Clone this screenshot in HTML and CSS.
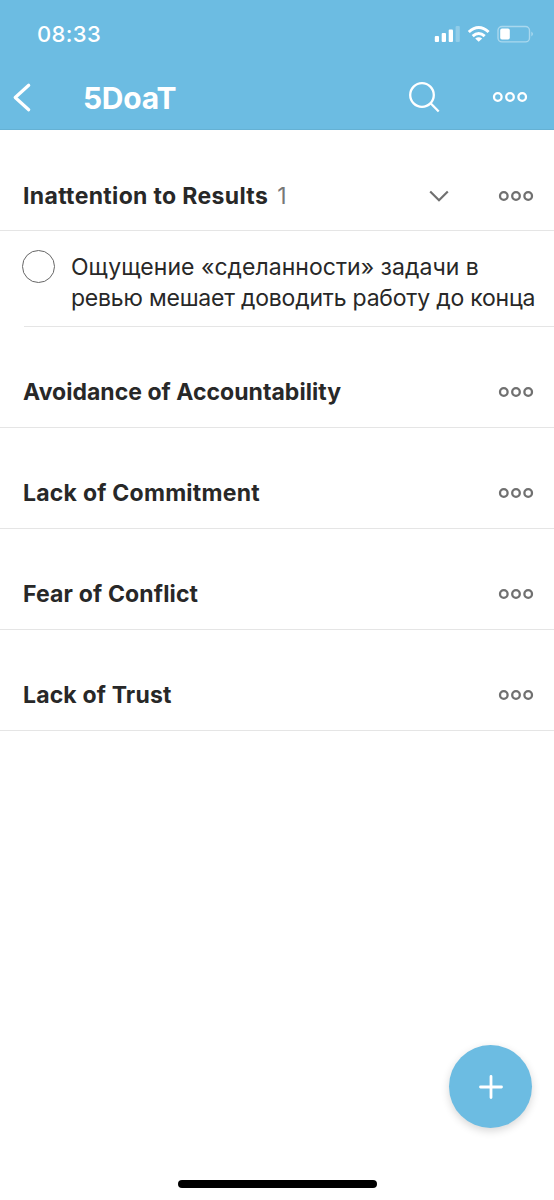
FILE: index.html
```html
<!DOCTYPE html>
<html lang="ru">
<head>
<meta charset="utf-8">
<meta name="viewport" content="width=device-width">
<title>5DoaT</title>
<link rel="stylesheet" href="styles.css">
</head>
<body>
<svg class="defs" width="0" height="0" aria-hidden="true">
  <symbol id="dots" viewBox="0 0 36 12">
    <g fill="none" stroke="currentColor" stroke-width="2.3"><circle cx="5.8" cy="6" r="3.8"/><circle cx="18" cy="6" r="3.8"/><circle cx="30.2" cy="6" r="3.8"/></g>
  </symbol>
</svg>
<div class="screen">
  <header class="header">
    <div class="status">
      <span class="time">08:33</span>
      <svg class="indicators" width="100" height="20" viewBox="434 24 100 20">
        <g fill="#fff">
          <rect x="434.8" y="36" width="4.2" height="6" rx="1"/>
          <rect x="441.7" y="33" width="4.3" height="9" rx="1"/>
          <rect x="448.7" y="29.5" width="4.3" height="12.5" rx="1"/>
          <rect x="455.6" y="26" width="4.2" height="16" rx="1" opacity=".25"/>
          <path d="M478.7 41.8l-3.5-3.3q3.5-2.7 7 0z"/>
          <rect x="500.2" y="28.6" width="9.6" height="11" rx="1.8"/>
          <path d="M531.3 31.5q3.4 2.5 0 5z" opacity=".4"/>
        </g>
        <g fill="none" stroke="#fff" stroke-width="3">
          <path d="M468.8 32q9.9-9 19.8 0"/>
          <path d="M472.7 36.2q6-5.4 12 0"/>
        </g>
        <rect x="498" y="26.5" width="31.5" height="15.4" rx="4" fill="none" stroke="#fff" stroke-width="1.4" opacity=".42"/>
      </svg>
    </div>
    <div class="navbar">
      <svg class="back" width="22" height="30" viewBox="11 82 22 30"><path d="M28.7 85.3L15.2 97.5l13.5 12.2" fill="none" stroke="#fff" stroke-width="3.2" stroke-linecap="round" stroke-linejoin="round"/></svg>
      <h1 class="title">5DoaT</h1>
      <svg class="search" width="34" height="34" viewBox="407 80 34 34"><g fill="none" stroke="#fff" stroke-width="2.3"><circle cx="422" cy="95" r="11.8"/><path d="M430.6 103.2l8.1 8.3"/></g></svg>
      <svg class="dots" width="36" height="12"><use href="#dots"/></svg>
    </div>
  </header>
  <main>
    <section class="section">
      <h2 class="name results">Inattention to Results</h2><span class="count">1</span>
      <svg class="chevron" width="22" height="14" viewBox="0 0 22 14"><path d="M2.2 2.5l8.8 8.8 8.8-8.8" fill="none" stroke="currentColor" stroke-width="2.2"/></svg>
      <svg class="dots" width="36" height="12"><use href="#dots"/></svg>
    </section>
    <article class="task">
      <span class="check"></span>
      <p class="text"><span class="first-line">Ощущение «сделанности» задачи в</span><br><span class="second-line">ревью мешает доводить работу до конца</span></p>
    </article>
    <section class="section"><h2 class="name accountability">Avoidance of Accountability</h2><svg class="dots" width="36" height="12"><use href="#dots"/></svg></section>
    <section class="section"><h2 class="name commitment">Lack of Commitment</h2><svg class="dots" width="36" height="12"><use href="#dots"/></svg></section>
    <section class="section"><h2 class="name">Fear of Conflict</h2><svg class="dots" width="36" height="12"><use href="#dots"/></svg></section>
    <section class="section"><h2 class="name">Lack of Trust</h2><svg class="dots" width="36" height="12"><use href="#dots"/></svg></section>
  </main>
  <footer class="footer">
    <div class="fab"><svg width="26" height="26" viewBox="0 0 26 26"><path d="M13 2.5v21M2.5 13h21" stroke="#fff" stroke-width="2.8" stroke-linecap="round"/></svg></div>
    <div class="home"></div>
  </footer>
</div>
</body>
</html>
```
FILE: styles.css
```css
* { box-sizing: border-box; }
body { margin: 0; background: #fff; color: #282828; font-family: Inter, "Liberation Sans", sans-serif; }
.defs { display: block; height: 0; }
.screen { width: 554px; height: 1200px; display: flex; flex-direction: column; overflow: hidden; }
svg { flex: none; display: block; }
h1, h2, p { margin: 0; white-space: nowrap; }
.header { height: 130px; background: #6cbce2; color: #fff; border-bottom: 1px solid #65b1d4; }
.status { height: 64px; padding: 4px 20px 0 37px; display: flex; align-items: center; justify-content: space-between; }
.time { font-size: 22px; font-weight: 500; letter-spacing: .35px; }
.navbar { height: 65px; padding: 1px 26px 0 11px; display: flex; align-items: center; }
.title { margin-left: 50px; padding-top: 1px; font-size: 30px; font-weight: 700; letter-spacing: -.3px; flex: 1; }
.search { margin-right: 51px; }
.section { height: 101px; padding: 30px 20px 0 23px; border-bottom: 1px solid #e5e5e5; display: flex; align-items: center; }
.section:first-child { padding-top: 31px; }
.name { font-size: 23px; font-weight: 700; letter-spacing: .16px; }
.results { letter-spacing: .34px; }
.accountability { letter-spacing: .03px; }
.commitment { letter-spacing: .24px; }
.count { margin-left: 9px; font-size: 23px; font-weight: 400; color: #777; }
.section .dots { margin-left: auto; color: #707070; }
.chevron { margin-left: auto; color: #707070; }
.section .chevron + .dots { margin-left: 48px; }
.task { height: 96px; margin-left: 24px; border-bottom: 1px solid #e5e5e5; display: flex; }
.check { flex: none; width: 33px; height: 33px; margin: 19px 0 0 -2px; border: 1.5px solid #666; border-radius: 50%; }
.text { margin: 21px 0 0 16px; font-size: 23px; line-height: 31px; }
.first-line { letter-spacing: .03px; }
.second-line { letter-spacing: -.21px; }
.footer { margin-top: auto; height: 155px; display: flex; flex-direction: column; align-items: center; }
.fab { align-self: flex-end; width: 83px; height: 83px; margin-right: 22px; border-radius: 50%; background: #6cbce2; display: flex; align-items: center; justify-content: center; box-shadow: 0 3px 9px rgba(0,0,0,.16); }
.home { width: 199px; height: 8px; margin-top: 52px; border-radius: 4px; background: #000; }
```
